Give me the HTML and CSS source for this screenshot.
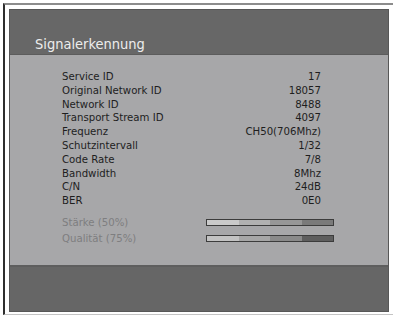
FILE: index.html
```html
<!DOCTYPE html>
<html lang="de">
<head>
    <meta charset="UTF-8">
    <meta name="viewport" content="width=device-width, initial-scale=1.0">
    <title>Signalerkennung</title>
    <link rel="stylesheet" href="styles.css">
</head>
<body>
    <div class="frame">
        <div class="panel">
            <div class="panel-header">
                <h1 class="title">Signalerkennung</h1>
            </div>

            <div class="panel-body">
                <div class="info-row"><span>Service ID</span><span>17</span></div>
                <div class="info-row"><span>Original Network ID</span><span>18057</span></div>
                <div class="info-row"><span>Network ID</span><span>8488</span></div>
                <div class="info-row"><span>Transport Stream ID</span><span>4097</span></div>
                <div class="info-row"><span>Frequenz</span><span>CH50(706Mhz)</span></div>
                <div class="info-row"><span>Schutzintervall</span><span>1/32</span></div>
                <div class="info-row"><span>Code Rate</span><span>7/8</span></div>
                <div class="info-row"><span>Bandwidth</span><span>8Mhz</span></div>
                <div class="info-row"><span>C/N</span><span>24dB</span></div>
                <div class="info-row"><span>BER</span><span>0E0</span></div>

                <div class="meters">
                    <div class="meter-row">
                        <span class="meter-label">Stärke (50%)</span>
                        <div class="bar">
                            <div class="seg seg-1"></div>
                            <div class="seg seg-2"></div>
                            <div class="seg seg-3"></div>
                            <div class="seg seg-4"></div>
                        </div>
                    </div>
                    <div class="meter-row">
                        <span class="meter-label">Qualität (75%)</span>
                        <div class="bar bar-quality">
                            <div class="seg seg-1"></div>
                            <div class="seg seg-2"></div>
                            <div class="seg seg-3"></div>
                            <div class="seg seg-4"></div>
                        </div>
                    </div>
                </div>
            </div>

            <div class="panel-footer"></div>
        </div>
    </div>
</body>
</html>
```

FILE: styles.css
```css
body {
    margin: 0;
    padding: 0;
    background-color: #ffffff;
    font-family: "DejaVu Sans", Verdana, sans-serif;
    font-stretch: condensed;
}
.frame {
    margin: 3px 0 0 3px;
    padding: 4px 0 2px 4px;
    border-top: 2px solid #8c8c8c;
    border-left: 2px solid #2e2e2e;
    border-bottom: 1px solid #c4c4c4;
    width: 390px;
    box-sizing: border-box;
}
.panel {
    width: 380px;
    border: 1px solid #575757;
    background-color: #666666;
    box-sizing: border-box;
}
.panel-header {
    height: 45px;
    padding: 26px 0 0 25px;
    box-sizing: border-box;
    background-color: #676767;
    border-bottom: 1px solid #5c5c5c;
}
.title {
    margin: 0;
    font-size: 14.5px;
    line-height: 17px;
    font-weight: normal;
    color: #ededed;
}
.panel-body {
    height: 210px;
    padding: 15px 0 0 52px;
    box-sizing: border-box;
    background-color: #a7a7a9;
}
.info-row {
    width: 259px;
    display: flex;
    justify-content: space-between;
    font-size: 11.3px;
    line-height: 13.8px;
    color: #1e1e1e;
}
.meters {
    margin-top: 7px;
}
.meter-row {
    display: flex;
    align-items: center;
    height: 16px;
    font-size: 11.3px;
    color: #7e7e80;
}
.meter-label {
    width: 144px;
}
.bar {
    display: flex;
    width: 128px;
    height: 7px;
    border: 1px solid #3c3c3c;
    box-sizing: border-box;
}
.seg {
    flex: 1;
}
.seg-1 { background-color: #cacaca; }
.seg-2 { background-color: #b1b1b1; }
.seg-3 { background-color: #979797; }
.seg-4 { background-color: #7a7a7a; }
.bar-quality .seg-1 { background-color: #c2c2c2; }
.bar-quality .seg-2 { background-color: #a6a6a6; }
.bar-quality .seg-3 { background-color: #8a8a8a; }
.bar-quality .seg-4 { background-color: #5e5e5e; }
.panel-footer {
    height: 46px;
    background-color: #666666;
    border-top: 2px solid #5e5e5e;
    box-sizing: border-box;
}
```
